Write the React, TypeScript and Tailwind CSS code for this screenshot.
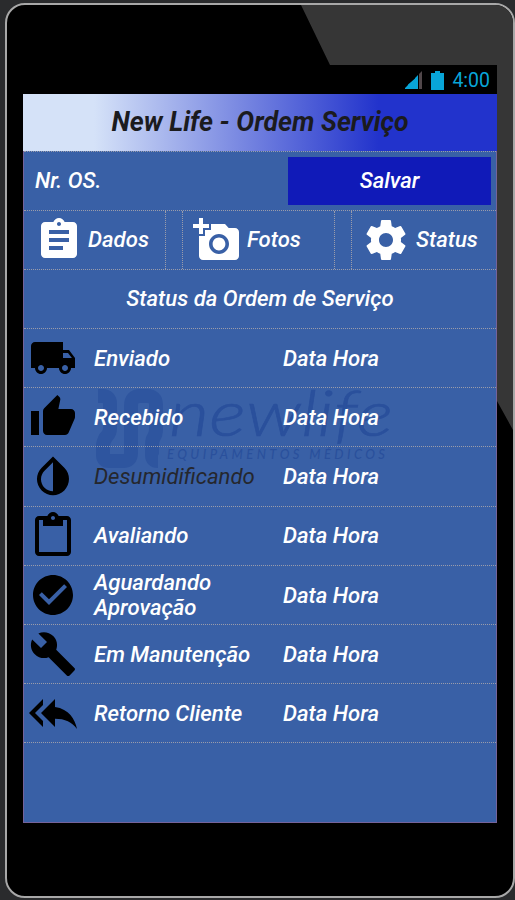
import { ReactNode } from "react";
import {
  MdAddAPhoto,
  MdAssignment,
  MdBuild,
  MdCheckCircle,
  MdContentPaste,
  MdLocalShipping,
  MdReplyAll,
} from "react-icons/md";

interface IconProps {
  size: number;
}

interface TabProps {
  label: string;
  icon: ReactNode;
  className: string;
}

interface StatusItem {
  label: string;
  icon: ReactNode;
  muted?: boolean;
}

function IconSettings({ size }: IconProps) {
  return (
    <svg width={size} height={size} viewBox="0 0 24 24" fill="currentColor">
      <path d="M19.43 12.98c.04-.32.07-.64.07-.98s-.03-.66-.07-.98l2.11-1.65c.19-.15.24-.42.12-.64l-2-3.46c-.12-.22-.39-.3-.61-.22l-2.49 1c-.52-.4-1.08-.73-1.69-.98l-.38-2.65C14.46 2.18 14.25 2 14 2h-4c-.25 0-.46.18-.49.42l-.38 2.65c-.61.25-1.17.59-1.69.98l-2.49-1c-.23-.09-.49 0-.61.22l-2 3.46c-.13.22-.07.49.12.64l2.11 1.65c-.04.32-.07.65-.07.98s.03.66.07.98l-2.11 1.65c-.19.15-.24.42-.12.64l2 3.46c.12.22.39.3.61.22l2.49-1c.52.4 1.08.73 1.69.98l.38 2.65c.03.24.24.42.49.42h4c.25 0 .46-.18.49-.42l.38-2.65c.61-.25 1.17-.59 1.69-.98l2.49 1c.23.09.49 0 .61-.22l2-3.46c.12-.22.07-.49-.12-.64l-2.11-1.65zM12 15.5c-1.93 0-3.5-1.57-3.5-3.5s1.57-3.5 3.5-3.5 3.5 1.57 3.5 3.5-1.57 3.5-3.5 3.5z" />
    </svg>
  );
}

function IconThumbUp({ size }: IconProps) {
  return (
    <svg width={size} height={size} viewBox="0 0 24 24" fill="currentColor">
      <path d="M1 21h4V9H1v12zm22-11c0-1.1-.9-2-2-2h-6.31l.95-4.57.03-.32c0-.41-.17-.79-.44-1.06L14.17 1 7.59 7.59C7.22 7.95 7 8.45 7 9v10c0 1.1.9 2 2 2h9c.83 0 1.54-.5 1.84-1.22l3.02-7.05c.09-.23.14-.47.14-.73v-2z" />
    </svg>
  );
}

function IconDrop({ size }: IconProps) {
  return (
    <svg width={size} height={size} viewBox="0 0 24 24" fill="currentColor">
      <path d="M17.66 7.93L12 2.27 6.34 7.93c-3.12 3.12-3.12 8.19 0 11.31C7.9 20.8 9.95 21.58 12 21.58c2.05 0 4.1-.78 5.66-2.34 3.12-3.12 3.12-8.19 0-11.31zM12 19.59c-1.6 0-3.11-.62-4.24-1.76C6.62 16.69 6 15.19 6 13.59s.62-3.11 1.76-4.24L12 5.1v14.49z" />
    </svg>
  );
}

function Watermark() {
  return (
    <svg
      className="absolute left-[70px] top-[235px] -z-10 overflow-visible"
      width="300"
      height="90"
      viewBox="0 0 300 90"
      fill="#2a509c"
    >
      <path
        d="M4 10h4q8 0 8 8v24q0 5-3 8t-4 9v10q0 6 6 6h14q8 0 8-8V20q0-10 9-10h7q9 0 9 9v24q0 5-2 8t-2 8v10q0 6 6 6"
        fill="none"
        stroke="#2e559f"
        strokeWidth="14"
      />
      <text
        x="75"
        y="50"
        fontFamily="Lato"
        fontStyle="italic"
        fontWeight="300"
        fontSize="63"
        textLength="224"
        lengthAdjust="spacingAndGlyphs"
        stroke="#2a509c"
        strokeWidth="0.6"
      >
        newlife
      </text>
      <text
        x="73"
        y="73"
        fontFamily="Lato"
        fontStyle="italic"
        fontSize="13"
        textLength="218"
      >
        EQUIPAMENTOS MÉDICOS
      </text>
    </svg>
  );
}

function Tab({ label, icon, className }: TabProps) {
  return (
    <button
      className={
        "flex items-center h-full pb-px border-dotted border-[#9a9caa] " +
        className
      }
    >
      {icon}
      <span>{label}</span>
    </button>
  );
}

const statusItems: StatusItem[] = [
  { label: "Enviado", icon: <MdLocalShipping size={48} /> },
  { label: "Recebido", icon: <IconThumbUp size={48} /> },
  { label: "Desumidificando", icon: <IconDrop size={48} />, muted: true },
  { label: "Avaliando", icon: <MdContentPaste size={48} /> },
  { label: "Aguardando Aprovação", icon: <MdCheckCircle size={48} /> },
  { label: "Em Manutenção", icon: <MdBuild size={48} /> },
  { label: "Retorno Cliente", icon: <MdReplyAll size={48} /> },
];

export default function App() {
  return (
    <div className="w-[515px] h-[900px] bg-[#2a2b2d] pl-[5px] pt-[3px] overflow-hidden">
      <div className="relative w-[510px] h-[895px] rounded-[20px] border-2 border-[#a8a8a8] bg-black overflow-hidden pl-4 pt-[60px]">
        <svg
          className="absolute left-0 top-0"
          width="506"
          height="440"
          viewBox="7 5 506 440"
          fill="#363636"
        >
          <path d="M301 5L330 65H497V401L513 430V5z" />
        </svg>

        <div className="relative w-[474px] font-['Roboto',sans-serif] italic font-medium text-[22.15px] leading-[24.5px] text-white">
          <div className="flex items-center justify-end h-[29px] pt-px pr-[7px] bg-black text-[#08a5d8] not-italic font-normal text-[19.5px]">
            <svg width="18" height="18" viewBox="0 0 18 18" fill="#08a5d8">
              <path d="M0 18v-1l3-3v4zM3 18v-4.5L6 11v7zM6 18v-7l4-3.500v10.500zM10 18V7l3-3v14z" />
              <path d="M14 18V3l3-3v18z" fill="#51474a" />
            </svg>
            <svg
              className="ml-2"
              width="13"
              height="19"
              viewBox="0 0 13 19"
              fill="#08a5d8"
            >
              <path d="M4 0h5v2h4v17H0V2h4z" />
            </svg>
            <span className="ml-2 pt-0.5">4:00</span>
          </div>

          <div className="flex items-center justify-center h-[57px] bg-linear-to-r/srgb from-[#d5e2f8] from-15% to-[#2233cc] to-75% text-[#1b1b1e] text-[26.7px] font-bold">
            New Life - Ordem Serviço
          </div>

          <div className="relative isolate h-[672px] bg-[#3960a6] border border-t-0 border-[#75639a]">
            <Watermark />

            <div className="flex items-center justify-between h-[60px] pb-px pl-[11px] pr-[5px] border-y border-dotted border-[#9a9caa]">
              <span>Nr. OS.</span>
              <button className="w-[203px] h-[48px] bg-[#101ab8] italic">
                Salvar
              </button>
            </div>

            <div className="flex justify-between h-[59px] border-b border-dotted border-[#9a9caa]">
              <Tab
                label="Dados"
                icon={<MdAssignment size={48} />}
                className="w-[142px] border-r pl-[11px] gap-[5px]"
              />
              <Tab
                label="Fotos"
                icon={<MdAddAPhoto size={48} />}
                className="w-[153px] border-x pl-[10px] gap-[6px]"
              />
              <Tab
                label="Status"
                icon={<IconSettings size={48} />}
                className="w-[145px] border-l pl-[10px] gap-[6px]"
              />
            </div>

            <div className="flex items-center justify-center h-[59px] pb-px border-b border-dotted border-[#9a9caa]">
              Status da Ordem de Serviço
            </div>

            <div>
              {statusItems.map((item) => (
                <div
                  key={item.label}
                  className="flex items-center h-[59.2px] border-b border-dotted border-[#9a9caa]"
                >
                  <div className="w-[58px] flex justify-center text-black">
                    {item.icon}
                  </div>
                  <div
                    className={
                      item.muted
                        ? "w-[189px] pl-3 font-normal text-[#25272d]"
                        : "w-[189px] pl-3 pr-3"
                    }
                  >
                    {item.label}
                  </div>
                  <div className="pl-3">Data Hora</div>
                </div>
              ))}
            </div>
          </div>
        </div>
      </div>
    </div>
  );
}
